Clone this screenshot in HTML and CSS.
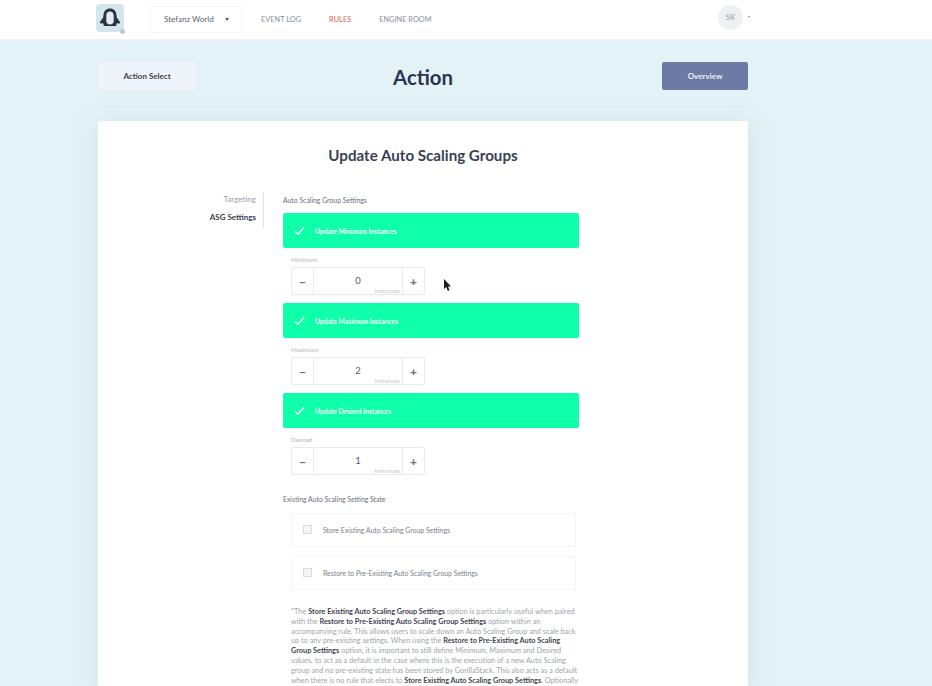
FILE: index.html
```html
<!DOCTYPE html>
<html lang="en">
<head>
    <meta charset="UTF-8">
    <meta name="viewport" content="width=device-width, initial-scale=1.0">
    <title>Action</title>
    <link rel="stylesheet" href="styles.css">
</head>
<body>
    <header class="topbar">
        <div class="topbar-inner">
            <div class="logo">
                <svg width="22" height="22" viewBox="0 0 22 22">
                    <path d="M11 1.500c3.600 0 6 2.400 6.300 5.600l.5 3.400 3 4.300c.6 1 .1 1.900-1 1.800l-2-.3-.8 2.700H4.900l-.8-2.700-2 .3c-1.100.1-1.600-.8-1-1.800l3-4.300.5-3.400C5 3.900 7.400 1.500 11 1.500z" fill="#2b3540"/>
                    <path d="M11 4.500c2.400 0 3.700 1.700 3.700 4v5.800c0 1.800-1.500 3.200-3.700 3.200s-3.700-1.400-3.700-3.200V8.500c0-2.300 1.300-4 3.700-4z" fill="#e3edf1"/>
                </svg>
                <span class="logo-dot"></span>
            </div>
            <div class="world-select">Stefanz World <span class="caret"></span></div>
            <nav class="nav">
                <a>EVENT LOG</a>
                <a class="current">RULES</a>
                <a>ENGINE ROOM</a>
            </nav>
            <div class="user">
                <div class="avatar">SK</div>
                <span class="user-caret"></span>
            </div>
        </div>
    </header>

    <main class="page">
        <div class="title-row">
            <button class="btn-light">Action Select</button>
            <h1>Action</h1>
            <button class="btn-dark">Overview</button>
        </div>

        <section class="card">
            <h2>Update Auto Scaling Groups</h2>
            <div class="columns">
                <aside class="steps">
                    <div class="step">Targeting</div>
                    <div class="step active">ASG Settings</div>
                </aside>
                <div class="form">
                    <h3>Auto Scaling Group Settings</h3>

                    <div class="toggle">
                        <svg class="check" width="11" height="10" viewBox="0 0 12 10"><path d="M1 5.500l3.200 3L11 1" fill="none" stroke="#eafff6" stroke-width="1.500"/></svg>
                        <span>Update Minimum Instances</span>
                    </div>
                    <div class="field-label">Minimum</div>
                    <div class="stepper">
                        <div class="stepper-btn">−</div>
                        <div class="stepper-value">0<span class="unit">Instances</span></div>
                        <div class="stepper-btn">+</div>
                    </div>

                    <div class="toggle">
                        <svg class="check" width="11" height="10" viewBox="0 0 12 10"><path d="M1 5.500l3.200 3L11 1" fill="none" stroke="#eafff6" stroke-width="1.500"/></svg>
                        <span>Update Maximum Instances</span>
                    </div>
                    <div class="field-label">Maximum</div>
                    <div class="stepper">
                        <div class="stepper-btn">−</div>
                        <div class="stepper-value">2<span class="unit">Instances</span></div>
                        <div class="stepper-btn">+</div>
                    </div>

                    <div class="toggle">
                        <svg class="check" width="11" height="10" viewBox="0 0 12 10"><path d="M1 5.500l3.200 3L11 1" fill="none" stroke="#eafff6" stroke-width="1.500"/></svg>
                        <span>Update Desired Instances</span>
                    </div>
                    <div class="field-label">Desired</div>
                    <div class="stepper">
                        <div class="stepper-btn">−</div>
                        <div class="stepper-value">1<span class="unit">Instances</span></div>
                        <div class="stepper-btn">+</div>
                    </div>

                    <h3 class="state-title">Existing Auto Scaling Setting State</h3>
                    <div class="option"><span class="box"></span>Store Existing Auto Scaling Group Settings</div>
                    <div class="option"><span class="box"></span>Restore to Pre-Existing Auto Scaling Group Settings</div>

                    <p class="note">*The <b>Store Existing Auto Scaling Group Settings</b> option is particularly useful when paired<br>
                    with the <b>Restore to Pre-Existing Auto Scaling Group Settings</b> option within an<br>
                    accompanying rule. This allows users to scale down an Auto Scaling Group and scale back<br>
                    up to any pre-existing settings. When using the <b>Restore to Pre-Existing Auto Scaling</b><br>
                    <b>Group Settings</b> option, it is important to still define Minimum, Maximum and Desired<br>
                    values, to act as a default in the case where this is the execution of a new Auto Scaling<br>
                    group and no pre-existing state has been stored by GorillaStack. This also acts as a default<br>
                    when there is no rule that elects to <b>Store Existing Auto Scaling Group Settings</b>. Optionally</p>
                </div>
            </div>
        </section>
    </main>

    <svg class="cursor" width="9" height="13" viewBox="0 0 9 13"><path d="M1 0v10l2.300-2 1.500 4 1.700-.7-1.500-3.800H8z" fill="#1d1d22"/></svg>
</body>
</html>
```

FILE: styles.css
```css
html, body {
    height: 686px;
    overflow: hidden;
}
body {
    margin: 0;
    position: relative;
    font-family: "Lato", "Liberation Sans", sans-serif;
    background-color: #e3f2f6;
    color: #2f3650;
}
.topbar {
    height: 40px;
    background-color: #fff;
    border-bottom: 1px solid #edf3f5;
    box-sizing: border-box;
}
.topbar-inner {
    width: 650px;
    margin-left: 96px;
    height: 100%;
    display: flex;
    align-items: center;
}
.logo {
    width: 28px;
    height: 28px;
    margin-top: -4px;
    border-radius: 4px;
    background-color: #d5e5ec;
    display: flex;
    align-items: center;
    justify-content: center;
    position: relative;
}
.logo-dot {
    position: absolute;
    right: -1px;
    bottom: -2px;
    width: 5px;
    height: 5px;
    border-radius: 50%;
    background-color: #b9cbd4;
}
.world-select {
    margin-left: 26px;
    width: 92px;
    height: 27px;
    margin-top: -1px;
    border: 1px solid #f3f5f6;
    border-radius: 2px;
    font-size: 8px;
    color: #5d6470;
    display: flex;
    align-items: center;
    padding-left: 13px;
    box-sizing: border-box;
}
.caret {
    margin-left: 11px;
    border-left: 2.500px solid transparent;
    border-right: 2.500px solid transparent;
    border-top: 3px solid #555c66;
}
.nav {
    display: flex;
    gap: 28px;
    margin-left: 19px;
    font-size: 7.400px;
    color: #8b9098;
}
.nav .current {
    color: #e8604f;
}
.user {
    margin-left: auto;
    display: flex;
    align-items: center;
    margin-right: -4px;
}
.avatar {
    width: 25px;
    height: 25px;
    margin-top: -4px;
    border-radius: 50%;
    background-color: #eef0f2;
    color: #a9afb5;
    font-size: 7.500px;
    font-weight: 700;
    display: flex;
    align-items: center;
    justify-content: center;
}
.user-caret {
    margin-left: 5px;
    margin-top: -5px;
    border-left: 1.500px solid transparent;
    border-right: 1.500px solid transparent;
    border-top: 2px solid #8b9098;
}
.page {
    width: 650px;
    margin-left: 98px;
}
.title-row {
    height: 67px;
    padding-top: 22px;
    box-sizing: border-box;
    display: flex;
    justify-content: space-between;
    align-items: flex-start;
    position: relative;
    border-bottom: 1px solid #dbeaee;
}
.title-row h1 {
    margin: 0;
    font-size: 20.400px;
    line-height: 32px;
    font-weight: 700;
    color: #2c3350;
    position: absolute;
    left: 295px;
    top: 21px;
}
.btn-light, .btn-dark {
    border: none;
    font-family: inherit;
    font-weight: 700;
    font-size: 8px;
    border-radius: 2px;
    padding: 0;
}
.btn-light {
    width: 98px;
    height: 28px;
    background-color: #eff3fa;
    color: #3c4256;
}
.btn-dark {
    width: 86px;
    height: 28px;
    background-color: #6c7aa5;
    color: #eef1fb;
}
.card {
    margin-top: 14px;
    height: 565px;
    background-color: #fff;
    border-radius: 3px 3px 0 0;
    box-shadow: 0 4px 24px rgba(150, 185, 195, 0.25);
    padding-top: 25px;
    box-sizing: border-box;
}
.card h2 {
    margin: 0;
    text-align: center;
    font-size: 15.150px;
    line-height: 18px;
    font-weight: 700;
    color: #3a4154;
}
.columns {
    display: flex;
    margin-top: 29px;
}
.steps {
    width: 166px;
    height: 35px;
    border-right: 1px solid #dfe3e6;
    text-align: right;
    font-size: 8px;
    color: #9ba1a8;
    padding-right: 7px;
    box-sizing: border-box;
}
.step {
    line-height: 12px;
    margin-bottom: 6px;
}
.step.active {
    color: #3a4154;
    font-weight: 700;
}
.form {
    margin-left: 19px;
    margin-top: 1px;
    width: 297px;
}
.form h3 {
    margin: 0 0 7px;
    font-size: 6.850px;
    line-height: 12px;
    font-weight: 400;
    color: #6a7078;
}
.toggle {
    height: 35px;
    width: 296px;
    background-color: #0fffab;
    border-radius: 2px;
    display: flex;
    align-items: center;
    padding-left: 11px;
    box-sizing: border-box;
    color: #f2fff9;
    font-size: 6.700px;
    font-weight: 700;
}
.toggle span {
    margin-left: 10px;
}
.field-label {
    margin: 7px 0 3px 8px;
    font-size: 6.300px;
    line-height: 9px;
    color: #b4b9bd;
}
.stepper {
    margin-left: 8px;
    width: 134px;
    height: 28px;
    border: 1px solid #e8eaec;
    border-radius: 2px;
    box-sizing: border-box;
    display: flex;
    margin-bottom: 8px;
}
.stepper-btn {
    width: 21px;
    display: flex;
    align-items: center;
    justify-content: center;
    font-size: 12px;
    font-weight: 900;
    color: #6f757c;
}
.stepper-value {
    flex: 1;
    border-left: 1px solid #e8eaec;
    border-right: 1px solid #e8eaec;
    display: flex;
    align-items: center;
    justify-content: center;
    padding-bottom: 1px;
    font-size: 9.500px;
    color: #555b63;
    position: relative;
}
.unit {
    position: absolute;
    right: 2px;
    bottom: 0;
    font-size: 6.200px;
    color: #c4c8cc;
}
.form .state-title {
    margin: 18px 0 8px;
}
.option {
    margin: 0 0 9px 8px;
    width: 285px;
    height: 34px;
    border: 1px solid #f3f4f5;
    box-sizing: border-box;
    display: flex;
    align-items: center;
    padding-left: 11px;
    font-size: 6.880px;
    color: #7b8188;
}
.box {
    width: 9px;
    height: 9px;
    box-sizing: border-box;
    border: 1px solid #d9dcdf;
    background-color: #f4f5f6;
    margin-right: 11px;
    margin-top: -2px;
}
.note {
    margin: 17px 0 0 8px;
    font-size: 7.300px;
    line-height: 9.800px;
    color: #a0a5ab;
    white-space: nowrap;
}
.note b {
    color: #3f4552;
}
.cursor {
    position: absolute;
    left: 443px;
    top: 279px;
}
```
